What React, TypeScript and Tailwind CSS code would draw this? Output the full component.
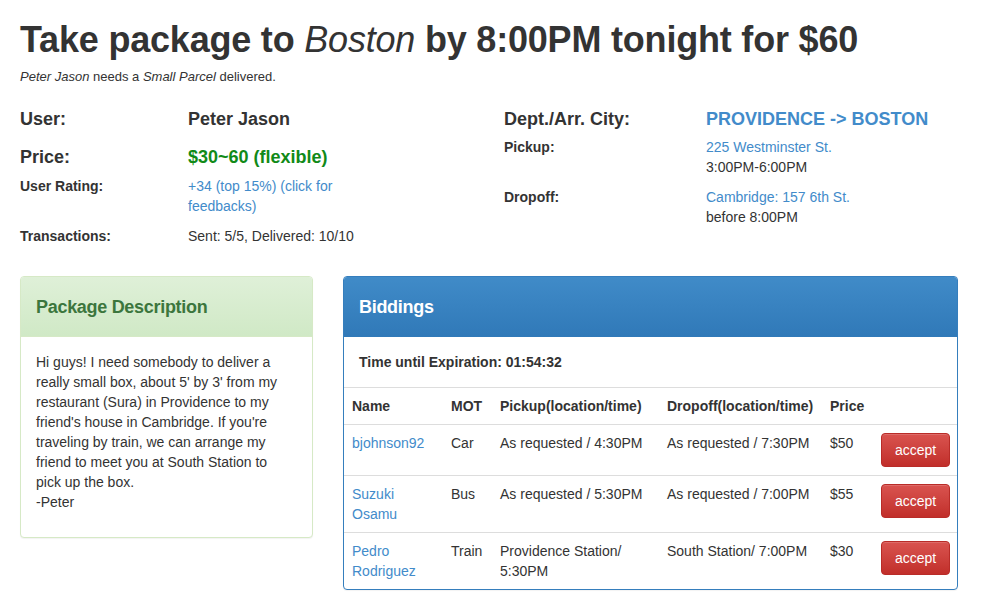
import React from "react";

const desc = [
  "Hi guys! I need somebody to deliver a",
  "really small box, about 5' by 3' from my",
  "restaurant (Sura) in Providence to my",
  "friend's house in Cambridge. If you're",
  "traveling by train, we can arrange my",
  "friend to meet you at South Station to",
  "pick up the box.",
  "-Peter",
];

type Bid = { name: string[]; mot: string; pickup: string[]; dropoff: string; price: string };
const bids: Bid[] = [
  { name: ["bjohnson92"], mot: "Car", pickup: ["As requested / 4:30PM"], dropoff: "As requested / 7:30PM", price: "$50" },
  { name: ["Suzuki", "Osamu"], mot: "Bus", pickup: ["As requested / 5:30PM"], dropoff: "As requested / 7:00PM", price: "$55" },
  { name: ["Pedro", "Rodriguez"], mot: "Train", pickup: ["Providence Station/", "5:30PM"], dropoff: "South Station/ 7:00PM", price: "$30" },
];

export default function App() {
  return (
    <div className="w-[982px] min-h-[613px] bg-white text-[#333] text-[14px] leading-[20px] font-['Liberation_Sans',Arial,sans-serif]">
      <div className="px-5 w-[978px]">
        <h1 className="mt-5 text-[36px] leading-[40px] font-bold tracking-[-0.2px] text-[#333]">
          Take package to <em className="font-normal">Boston</em> by 8:00PM tonight for $60
        </h1>
        <p className="mt-[7px] text-[13px] leading-[20px]">
          <em>Peter Jason</em> needs a <em>Small Parcel</em> delivered.
        </p>

        <div className="mt-[22px] flex gap-[30px]">
          <div className="w-[454px]">
            <div className="flex text-[18px] leading-[20px] font-bold">
              <div className="w-[168px]">User:</div>
              <div>Peter Jason</div>
            </div>
            <div className="mt-[18px] flex text-[18px] leading-[20px] font-bold">
              <div className="w-[168px]">Price:</div>
              <div className="text-[#118a18]">$30~60 (flexible)</div>
            </div>
            <div className="mt-[9px] flex">
              <div className="w-[168px] font-bold text-[14px]">User Rating:</div>
              <div className="w-[180px] text-[#428bca]">+34 (top 15%) (click for feedbacks)</div>
            </div>
            <div className="mt-[10px] flex">
              <div className="w-[168px] font-bold text-[14px]">Transactions:</div>
              <div>Sent: 5/5, Delivered: 10/10</div>
            </div>
          </div>
          <div className="w-[454px]">
            <div className="flex text-[18px] leading-[20px] font-bold">
              <div className="w-[202px]">Dept./Arr. City:</div>
              <div className="text-[#428bca]">PROVIDENCE -&gt; BOSTON</div>
            </div>
            <div className="mt-[8px] flex">
              <div className="w-[202px] font-bold text-[14px]">Pickup:</div>
              <div>
                <div className="text-[#428bca]">225 Westminster St.</div>
                <div>3:00PM-6:00PM</div>
              </div>
            </div>
            <div className="mt-[10px] flex">
              <div className="w-[202px] font-bold text-[14px]">Dropoff:</div>
              <div>
                <div className="text-[#428bca]">Cambridge: 157 6th St.</div>
                <div>before 8:00PM</div>
              </div>
            </div>
          </div>
        </div>

        <div className="mt-[30px] flex items-start gap-[30px]">
          <div className="w-[293px] rounded-[4px] border border-[#d6e9c6] bg-white shadow-[0_1px_1px_rgba(0,0,0,0.05)]">
            <div className="h-[60px] rounded-t-[3px] bg-gradient-to-b from-[#dff0d8] to-[#d0e9c6] border-b border-[#d6e9c6] px-[15px] flex items-center">
              <h3 className="text-[18px] font-bold text-[#3c763d] tracking-[-0.3px]">Package Description</h3>
            </div>
            <div className="px-[15px] pt-[15px] pb-[25px] text-[14px] leading-[20px]">
              {desc.map((l, i) => (
                <div key={i} className="whitespace-nowrap">{l}</div>
              ))}
            </div>
          </div>

          <div className="w-[615px] rounded-[4px] border border-[#357ebd] bg-white shadow-[0_1px_1px_rgba(0,0,0,0.05)]">
            <div className="h-[60px] rounded-t-[3px] bg-gradient-to-b from-[#408bc8] to-[#3079b8] px-[15px] flex items-center">
              <h3 className="text-[18px] font-bold text-white tracking-[-0.3px]">Biddings</h3>
            </div>
            <div className="p-[15px] font-bold text-[14px] leading-[20px]">Time until Expiration: 01:54:32</div>
            <table className="w-full table-fixed border-collapse text-[14px] leading-[20px]">
              <colgroup>
                <col className="w-[99px]" />
                <col className="w-[49px]" />
                <col className="w-[167px]" />
                <col className="w-[163px]" />
                <col className="w-[51px]" />
                <col />
              </colgroup>
              <thead>
                <tr className="border-t border-[#ddd]">
                  <th className="p-2 text-left font-bold">Name</th>
                  <th className="p-2 text-left font-bold">MOT</th>
                  <th className="p-2 text-left font-bold whitespace-nowrap">Pickup(location/time)</th>
                  <th className="p-2 text-left font-bold whitespace-nowrap">Dropoff(location/time)</th>
                  <th className="p-2 text-left font-bold">Price</th>
                  <th className="p-2"></th>
                </tr>
              </thead>
              <tbody>
                {bids.map((b, i) => (
                  <tr key={i} className="border-t border-[#ddd] align-top">
                    <td className="p-2 text-[#428bca]">
                      {b.name.map((n, j) => (
                        <div key={j}>{n}</div>
                      ))}
                    </td>
                    <td className="p-2">{b.mot}</td>
                    <td className="p-2">
                      {b.pickup.map((n, j) => (
                        <div key={j} className="whitespace-nowrap">{n}</div>
                      ))}
                    </td>
                    <td className="p-2 whitespace-nowrap">{b.dropoff}</td>
                    <td className="p-2">{b.price}</td>
                    <td className="p-2">
                      <button className="w-[69px] h-[34px] rounded-[4px] border border-[#b92c28] bg-gradient-to-b from-[#d9534f] to-[#c12e2a] text-white text-[14px] leading-[20px] shadow-[inset_0_1px_0_rgba(255,255,255,0.15)]">
                        accept
                      </button>
                    </td>
                  </tr>
                ))}
              </tbody>
            </table>
          </div>
        </div>
      </div>
    </div>
  );
}
